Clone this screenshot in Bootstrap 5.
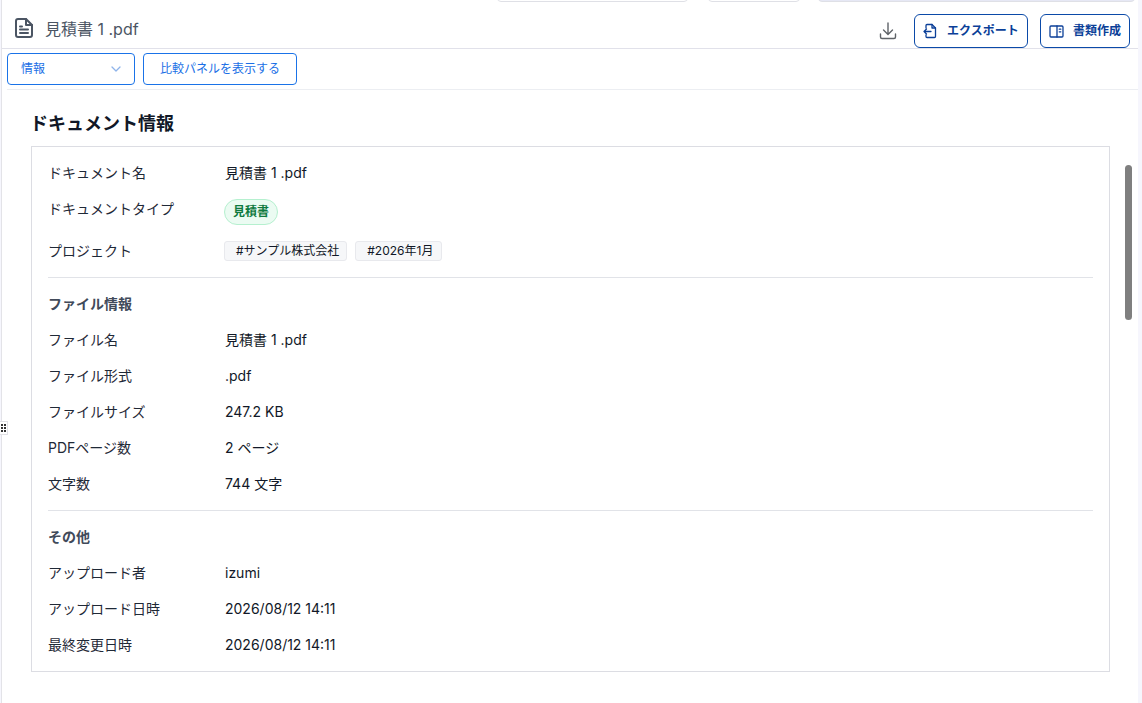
<!DOCTYPE html>
<html lang="ja">
<head>
  <meta charset="UTF-8">
  <meta name="viewport" content="width=device-width, initial-scale=1.0">
  <title>見積書1.pdf</title>
  <link href="https://cdn.jsdelivr.net/npm/bootstrap@5.3.0/dist/css/bootstrap.min.css" rel="stylesheet">
  <style>
    html, body { height: 100%; overflow: hidden; background: #fff; }
    body { font-family: Inter, "Noto Sans CJK JP", sans-serif; font-size: 14px; color: #111827; }
    .page-wrap { height: 703px; position: relative; padding-left: 1px; padding-right: 4px; background: #f6f6fd; }
    .page-inner { height: 100%; background: #fff; border-left: 1px solid #e3e3e8; }
    .tab-stub { position: absolute; top: -6px; height: 8px; background: #fff; border: 1px solid #dfe0e6; border-radius: 6px; }
    .tab-one { left: 497px; width: 191px; }
    .tab-two { left: 708px; width: 92px; }
    .tab-three { left: 818px; width: 317px; background: #e6e8f5; }
    .doc-head { height: 49px; padding: 14px 8px 0 12px; border-bottom: 1px solid #e1e1ea; }
    .doc-name { font-size: 16px; color: #4b5563; margin-left: 10px; line-height: 30px; }
    .head-btn { height: 34px; border: 1px solid #0b4aa8; border-radius: 6px; color: #0b3f98; background: #fff; font-size: 12px; font-weight: 700; padding: 0 8px; gap: 10px; white-space: nowrap; }
    .btn-export { width: 114px; }
    .btn-compose { width: 90px; margin-left: 12px; gap: 9px; }
    .dl-icon { margin-right: 17px; margin-top: 8px; }
    .tool-bar { height: 41px; margin-left: 5px; padding-top: 4px; border-bottom: 1px solid #eceef2; }
    .tool-btn { height: 32px; border: 1px solid #1a73e8; border-radius: 4px; color: #1a6fe6; background: #fff; font-size: 12px; }
    .tool-select { width: 128px; padding: 0 13px; }
    .tool-compare { width: 154px; margin-left: 8px; }
    .doc-title { font-size: 18px; font-weight: 700; margin: 22px 0 10px 28px; line-height: 24px; color: #111827; }
    .info-box { width: 1079px; height: 526px; margin-left: 29px; border: 1px solid #dcdde3; padding: 7px 16px 0; }
    .info-row { height: 36px; }
    .info-row.tall { height: 42px; }
    .info-key { width: 177px; color: #1f2937; }
    .info-row.type-row .info-key { margin-top: -6px; }
    .group-line { border-top: 1px solid #e1e3e8; margin: 9px 0 7px; }
    .group-name { height: 36px; font-size: 14px; font-weight: 700; color: #414a5a; }
    .type-pill { height: 26px; padding: 0 8px; margin-top: 1px; margin-left: -1px; border: 1px solid #b5f0cf; border-radius: 13px; background: #ebfbf2; color: #0f7a3f; font-size: 12px; font-weight: 700; }
    .tag-chip { height: 20px; margin-top: 1px; padding: 0 7px 0 11px; background: #f6f7f9; border: 1px solid #e8e9ed; border-radius: 3px; font-size: 12px; color: #111827; }
    .tag-first { margin-left: -1px; margin-right: 8px; }
    .tag-second { padding-right: 8px; }
    .scroll-thumb { position: absolute; left: 1125px; top: 165px; width: 7px; height: 155px; border-radius: 4px; background: #7f7f7f; }
    .grip-handle { position: absolute; left: 0; top: 421px; width: 8px; height: 14px; background: #fff; border: 1px solid #e1e1e6; border-left: 0; display: flex; align-items: center; justify-content: center; }
  </style>
</head>
<body>
  <div class="page-wrap">
    <div class="page-inner d-flex flex-column">
      <div class="tab-stub tab-one"></div>
      <div class="tab-stub tab-two"></div>
      <div class="tab-stub tab-three"></div>

      <!-- header -->
      <div class="doc-head d-flex align-items-start">
        <svg width="21" height="26" viewBox="0 0 21 26" fill="none" stroke="#4b5563" stroke-width="2" stroke-linejoin="round" stroke-linecap="round">
          <path d="M4 5h8l6 6v10a2 2 0 0 1-2 2H4a2 2 0 0 1-2-2V7a2 2 0 0 1 2-2z"/>
          <path d="M12 5v6h6"/>
          <path d="M6 12.500h2M6 15.500h8M6 19h8"/>
        </svg>
        <span class="doc-name">見積書 1 .pdf</span>
        <div class="ms-auto d-flex align-items-start">
          <svg class="dl-icon" width="18" height="18" viewBox="0 0 18 18" fill="none" stroke="#5f6368" stroke-width="1.4" stroke-linecap="round" stroke-linejoin="round">
            <path d="M9 1v11M4.500 8 9 12.500 13.500 8"/>
            <path d="M1.500 12v3a1.500 1.500 0 0 0 1.500 1.500h12a1.500 1.500 0 0 0 1.500-1.500v-3"/>
          </svg>
          <button type="button" class="head-btn btn-export d-inline-flex align-items-center">
            <svg width="14" height="16" viewBox="0 0 14 16" fill="none" stroke="#0b3f98" stroke-width="1.300" stroke-linecap="round" stroke-linejoin="round">
              <path d="M3 5V2.500a1 1 0 0 1 1-1h5l3.500 3.500v8.500a1 1 0 0 1-1 1H4a1 1 0 0 1-1-1V12"/>
              <path d="M9 1.500V5h3.500"/>
              <path d="M8 8.500H1M3.500 6 1 8.500 3.500 11"/>
            </svg>
            <span>エクスポート</span>
          </button>
          <button type="button" class="head-btn btn-compose d-inline-flex align-items-center">
            <svg width="15" height="13" viewBox="0 0 15 13" fill="none" stroke="#0b3f98" stroke-width="1.300" stroke-linecap="round" stroke-linejoin="round">
              <rect x="1" y="1" width="13" height="11" rx="1"/>
              <path d="M8 1v11M10.300 4.200h1.500M10.300 6.800h1.500"/>
            </svg>
            <span>書類作成</span>
          </button>
        </div>
      </div>

      <!-- toolbar -->
      <div class="tool-bar d-flex align-items-start">
        <button type="button" class="tool-btn tool-select d-flex align-items-center justify-content-between">
          <span>情報</span>
          <svg width="10" height="6" viewBox="0 0 10 6" fill="none" stroke="#8fb4ea" stroke-width="1.300" stroke-linecap="round" stroke-linejoin="round"><path d="M1 1l4 4 4-4"/></svg>
        </button>
        <button type="button" class="tool-btn tool-compare">比較パネルを表示する</button>
      </div>

      <!-- body -->
      <div class="doc-title">ドキュメント情報</div>
      <div class="info-box">
        <div class="info-row d-flex align-items-center"><div class="info-key">ドキュメント名</div><div>見積書 1 .pdf</div></div>
        <div class="info-row tall type-row d-flex align-items-center"><div class="info-key">ドキュメントタイプ</div><span class="type-pill d-inline-flex align-items-center">見積書</span></div>
        <div class="info-row d-flex align-items-center"><div class="info-key">プロジェクト</div><span class="tag-chip tag-first d-inline-flex align-items-center">#サンプル株式会社</span><span class="tag-chip tag-second d-inline-flex align-items-center">#2026年1月</span></div>

        <div class="group-line"></div>
        <div class="group-name d-flex align-items-center">ファイル情報</div>
        <div class="info-row d-flex align-items-center"><div class="info-key">ファイル名</div><div>見積書 1 .pdf</div></div>
        <div class="info-row d-flex align-items-center"><div class="info-key">ファイル形式</div><div>.pdf</div></div>
        <div class="info-row d-flex align-items-center"><div class="info-key">ファイルサイズ</div><div>247.2 KB</div></div>
        <div class="info-row d-flex align-items-center"><div class="info-key">PDFページ数</div><div>2 ページ</div></div>
        <div class="info-row d-flex align-items-center"><div class="info-key">文字数</div><div>744 文字</div></div>

        <div class="group-line"></div>
        <div class="group-name d-flex align-items-center">その他</div>
        <div class="info-row d-flex align-items-center"><div class="info-key">アップロード者</div><div>izumi</div></div>
        <div class="info-row d-flex align-items-center"><div class="info-key">アップロード日時</div><div>2026/08/12 14:11</div></div>
        <div class="info-row d-flex align-items-center"><div class="info-key">最終変更日時</div><div>2026/08/12 14:11</div></div>
      </div>
    </div>
    <div class="scroll-thumb"></div>
    <div class="grip-handle">
      <svg width="5" height="8" viewBox="0 0 5 8" fill="#333"><rect x="0" y="0" width="2" height="2"/><rect x="3" y="0" width="2" height="2"/><rect x="0" y="3" width="2" height="2"/><rect x="3" y="3" width="2" height="2"/><rect x="0" y="6" width="2" height="2"/><rect x="3" y="6" width="2" height="2"/></svg>
    </div>
  </div>
  <script src="https://cdn.jsdelivr.net/npm/bootstrap@5.3.0/dist/js/bootstrap.bundle.min.js"></script>
</body>
</html>
